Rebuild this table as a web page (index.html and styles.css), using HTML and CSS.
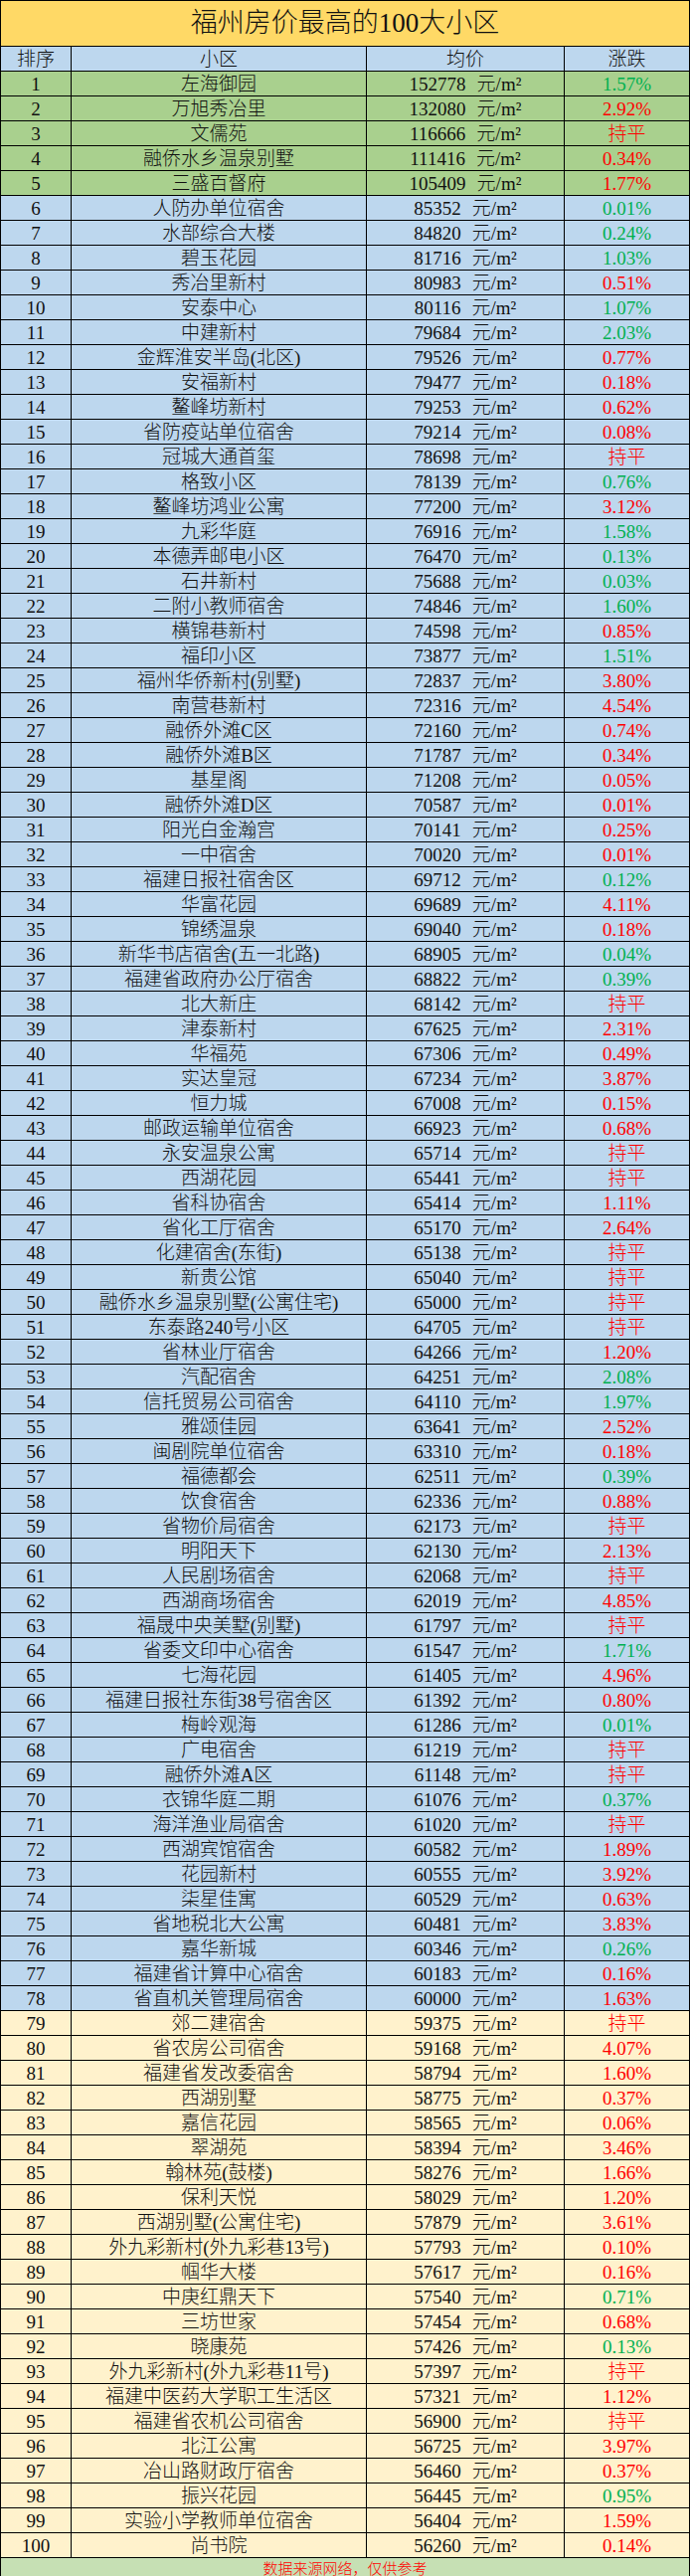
FILE: index.html
```html
<!DOCTYPE html>
<html lang="zh-CN">
<head>
<meta charset="utf-8">
<title>福州房价最高的100大小区</title>
<link rel="stylesheet" href="styles.css">
</head>
<body>
<div class="sheet">
  <div class="title">福州房价最高的100大小区</div>
  <div class="row head"><span>排序</span><span>小区</span><span>均价</span><span>涨跌</span></div>
  <div class="row g"><span>1</span><span>左海御园</span><span>152778<i>元/m²</i></span><span class="dn">1.57%</span></div>
  <div class="row g"><span>2</span><span>万旭秀冶里</span><span>132080<i>元/m²</i></span><span class="up">2.92%</span></div>
  <div class="row g"><span>3</span><span>文儒苑</span><span>116666<i>元/m²</i></span><span class="up">持平</span></div>
  <div class="row g"><span>4</span><span>融侨水乡温泉别墅</span><span>111416<i>元/m²</i></span><span class="up">0.34%</span></div>
  <div class="row g"><span>5</span><span>三盛百督府</span><span>105409<i>元/m²</i></span><span class="up">1.77%</span></div>
  <div class="row b"><span>6</span><span>人防办单位宿舍</span><span>85352<i>元/m²</i></span><span class="dn">0.01%</span></div>
  <div class="row b"><span>7</span><span>水部综合大楼</span><span>84820<i>元/m²</i></span><span class="dn">0.24%</span></div>
  <div class="row b"><span>8</span><span>碧玉花园</span><span>81716<i>元/m²</i></span><span class="dn">1.03%</span></div>
  <div class="row b"><span>9</span><span>秀冶里新村</span><span>80983<i>元/m²</i></span><span class="up">0.51%</span></div>
  <div class="row b"><span>10</span><span>安泰中心</span><span>80116<i>元/m²</i></span><span class="dn">1.07%</span></div>
  <div class="row b"><span>11</span><span>中建新村</span><span>79684<i>元/m²</i></span><span class="dn">2.03%</span></div>
  <div class="row b"><span>12</span><span>金辉淮安半岛(北区)</span><span>79526<i>元/m²</i></span><span class="up">0.77%</span></div>
  <div class="row b"><span>13</span><span>安福新村</span><span>79477<i>元/m²</i></span><span class="up">0.18%</span></div>
  <div class="row b"><span>14</span><span>鳌峰坊新村</span><span>79253<i>元/m²</i></span><span class="up">0.62%</span></div>
  <div class="row b"><span>15</span><span>省防疫站单位宿舍</span><span>79214<i>元/m²</i></span><span class="up">0.08%</span></div>
  <div class="row b"><span>16</span><span>冠城大通首玺</span><span>78698<i>元/m²</i></span><span class="up">持平</span></div>
  <div class="row b"><span>17</span><span>格致小区</span><span>78139<i>元/m²</i></span><span class="dn">0.76%</span></div>
  <div class="row b"><span>18</span><span>鳌峰坊鸿业公寓</span><span>77200<i>元/m²</i></span><span class="up">3.12%</span></div>
  <div class="row b"><span>19</span><span>九彩华庭</span><span>76916<i>元/m²</i></span><span class="dn">1.58%</span></div>
  <div class="row b"><span>20</span><span>本德弄邮电小区</span><span>76470<i>元/m²</i></span><span class="dn">0.13%</span></div>
  <div class="row b"><span>21</span><span>石井新村</span><span>75688<i>元/m²</i></span><span class="dn">0.03%</span></div>
  <div class="row b"><span>22</span><span>二附小教师宿舍</span><span>74846<i>元/m²</i></span><span class="dn">1.60%</span></div>
  <div class="row b"><span>23</span><span>横锦巷新村</span><span>74598<i>元/m²</i></span><span class="up">0.85%</span></div>
  <div class="row b"><span>24</span><span>福印小区</span><span>73877<i>元/m²</i></span><span class="dn">1.51%</span></div>
  <div class="row b"><span>25</span><span>福州华侨新村(别墅)</span><span>72837<i>元/m²</i></span><span class="up">3.80%</span></div>
  <div class="row b"><span>26</span><span>南营巷新村</span><span>72316<i>元/m²</i></span><span class="up">4.54%</span></div>
  <div class="row b"><span>27</span><span>融侨外滩C区</span><span>72160<i>元/m²</i></span><span class="up">0.74%</span></div>
  <div class="row b"><span>28</span><span>融侨外滩B区</span><span>71787<i>元/m²</i></span><span class="up">0.34%</span></div>
  <div class="row b"><span>29</span><span>基星阁</span><span>71208<i>元/m²</i></span><span class="up">0.05%</span></div>
  <div class="row b"><span>30</span><span>融侨外滩D区</span><span>70587<i>元/m²</i></span><span class="up">0.01%</span></div>
  <div class="row b"><span>31</span><span>阳光白金瀚宫</span><span>70141<i>元/m²</i></span><span class="up">0.25%</span></div>
  <div class="row b"><span>32</span><span>一中宿舍</span><span>70020<i>元/m²</i></span><span class="up">0.01%</span></div>
  <div class="row b"><span>33</span><span>福建日报社宿舍区</span><span>69712<i>元/m²</i></span><span class="dn">0.12%</span></div>
  <div class="row b"><span>34</span><span>华富花园</span><span>69689<i>元/m²</i></span><span class="up">4.11%</span></div>
  <div class="row b"><span>35</span><span>锦绣温泉</span><span>69040<i>元/m²</i></span><span class="up">0.18%</span></div>
  <div class="row b"><span>36</span><span>新华书店宿舍(五一北路)</span><span>68905<i>元/m²</i></span><span class="dn">0.04%</span></div>
  <div class="row b"><span>37</span><span>福建省政府办公厅宿舍</span><span>68822<i>元/m²</i></span><span class="dn">0.39%</span></div>
  <div class="row b"><span>38</span><span>北大新庄</span><span>68142<i>元/m²</i></span><span class="up">持平</span></div>
  <div class="row b"><span>39</span><span>津泰新村</span><span>67625<i>元/m²</i></span><span class="up">2.31%</span></div>
  <div class="row b"><span>40</span><span>华福苑</span><span>67306<i>元/m²</i></span><span class="up">0.49%</span></div>
  <div class="row b"><span>41</span><span>实达皇冠</span><span>67234<i>元/m²</i></span><span class="up">3.87%</span></div>
  <div class="row b"><span>42</span><span>恒力城</span><span>67008<i>元/m²</i></span><span class="up">0.15%</span></div>
  <div class="row b"><span>43</span><span>邮政运输单位宿舍</span><span>66923<i>元/m²</i></span><span class="up">0.68%</span></div>
  <div class="row b"><span>44</span><span>永安温泉公寓</span><span>65714<i>元/m²</i></span><span class="up">持平</span></div>
  <div class="row b"><span>45</span><span>西湖花园</span><span>65441<i>元/m²</i></span><span class="up">持平</span></div>
  <div class="row b"><span>46</span><span>省科协宿舍</span><span>65414<i>元/m²</i></span><span class="up">1.11%</span></div>
  <div class="row b"><span>47</span><span>省化工厅宿舍</span><span>65170<i>元/m²</i></span><span class="up">2.64%</span></div>
  <div class="row b"><span>48</span><span>化建宿舍(东街)</span><span>65138<i>元/m²</i></span><span class="up">持平</span></div>
  <div class="row b"><span>49</span><span>新贵公馆</span><span>65040<i>元/m²</i></span><span class="up">持平</span></div>
  <div class="row b"><span>50</span><span>融侨水乡温泉别墅(公寓住宅)</span><span>65000<i>元/m²</i></span><span class="up">持平</span></div>
  <div class="row b"><span>51</span><span>东泰路240号小区</span><span>64705<i>元/m²</i></span><span class="up">持平</span></div>
  <div class="row b"><span>52</span><span>省林业厅宿舍</span><span>64266<i>元/m²</i></span><span class="up">1.20%</span></div>
  <div class="row b"><span>53</span><span>汽配宿舍</span><span>64251<i>元/m²</i></span><span class="dn">2.08%</span></div>
  <div class="row b"><span>54</span><span>信托贸易公司宿舍</span><span>64110<i>元/m²</i></span><span class="dn">1.97%</span></div>
  <div class="row b"><span>55</span><span>雅颂佳园</span><span>63641<i>元/m²</i></span><span class="up">2.52%</span></div>
  <div class="row b"><span>56</span><span>闽剧院单位宿舍</span><span>63310<i>元/m²</i></span><span class="up">0.18%</span></div>
  <div class="row b"><span>57</span><span>福德都会</span><span>62511<i>元/m²</i></span><span class="dn">0.39%</span></div>
  <div class="row b"><span>58</span><span>饮食宿舍</span><span>62336<i>元/m²</i></span><span class="up">0.88%</span></div>
  <div class="row b"><span>59</span><span>省物价局宿舍</span><span>62173<i>元/m²</i></span><span class="up">持平</span></div>
  <div class="row b"><span>60</span><span>明阳天下</span><span>62130<i>元/m²</i></span><span class="up">2.13%</span></div>
  <div class="row b"><span>61</span><span>人民剧场宿舍</span><span>62068<i>元/m²</i></span><span class="up">持平</span></div>
  <div class="row b"><span>62</span><span>西湖商场宿舍</span><span>62019<i>元/m²</i></span><span class="up">4.85%</span></div>
  <div class="row b"><span>63</span><span>福晟中央美墅(别墅)</span><span>61797<i>元/m²</i></span><span class="up">持平</span></div>
  <div class="row b"><span>64</span><span>省委文印中心宿舍</span><span>61547<i>元/m²</i></span><span class="dn">1.71%</span></div>
  <div class="row b"><span>65</span><span>七海花园</span><span>61405<i>元/m²</i></span><span class="up">4.96%</span></div>
  <div class="row b"><span>66</span><span>福建日报社东街38号宿舍区</span><span>61392<i>元/m²</i></span><span class="up">0.80%</span></div>
  <div class="row b"><span>67</span><span>梅岭观海</span><span>61286<i>元/m²</i></span><span class="dn">0.01%</span></div>
  <div class="row b"><span>68</span><span>广电宿舍</span><span>61219<i>元/m²</i></span><span class="up">持平</span></div>
  <div class="row b"><span>69</span><span>融侨外滩A区</span><span>61148<i>元/m²</i></span><span class="up">持平</span></div>
  <div class="row b"><span>70</span><span>衣锦华庭二期</span><span>61076<i>元/m²</i></span><span class="dn">0.37%</span></div>
  <div class="row b"><span>71</span><span>海洋渔业局宿舍</span><span>61020<i>元/m²</i></span><span class="up">持平</span></div>
  <div class="row b"><span>72</span><span>西湖宾馆宿舍</span><span>60582<i>元/m²</i></span><span class="up">1.89%</span></div>
  <div class="row b"><span>73</span><span>花园新村</span><span>60555<i>元/m²</i></span><span class="up">3.92%</span></div>
  <div class="row b"><span>74</span><span>柒星佳寓</span><span>60529<i>元/m²</i></span><span class="up">0.63%</span></div>
  <div class="row b"><span>75</span><span>省地税北大公寓</span><span>60481<i>元/m²</i></span><span class="up">3.83%</span></div>
  <div class="row b"><span>76</span><span>嘉华新城</span><span>60346<i>元/m²</i></span><span class="dn">0.26%</span></div>
  <div class="row b"><span>77</span><span>福建省计算中心宿舍</span><span>60183<i>元/m²</i></span><span class="up">0.16%</span></div>
  <div class="row b"><span>78</span><span>省直机关管理局宿舍</span><span>60000<i>元/m²</i></span><span class="up">1.63%</span></div>
  <div class="row y"><span>79</span><span>郊二建宿舍</span><span>59375<i>元/m²</i></span><span class="up">持平</span></div>
  <div class="row y"><span>80</span><span>省农房公司宿舍</span><span>59168<i>元/m²</i></span><span class="up">4.07%</span></div>
  <div class="row y"><span>81</span><span>福建省发改委宿舍</span><span>58794<i>元/m²</i></span><span class="up">1.60%</span></div>
  <div class="row y"><span>82</span><span>西湖别墅</span><span>58775<i>元/m²</i></span><span class="up">0.37%</span></div>
  <div class="row y"><span>83</span><span>嘉信花园</span><span>58565<i>元/m²</i></span><span class="up">0.06%</span></div>
  <div class="row y"><span>84</span><span>翠湖苑</span><span>58394<i>元/m²</i></span><span class="up">3.46%</span></div>
  <div class="row y"><span>85</span><span>翰林苑(鼓楼)</span><span>58276<i>元/m²</i></span><span class="up">1.66%</span></div>
  <div class="row y"><span>86</span><span>保利天悦</span><span>58029<i>元/m²</i></span><span class="up">1.20%</span></div>
  <div class="row y"><span>87</span><span>西湖别墅(公寓住宅)</span><span>57879<i>元/m²</i></span><span class="up">3.61%</span></div>
  <div class="row y"><span>88</span><span>外九彩新村(外九彩巷13号)</span><span>57793<i>元/m²</i></span><span class="up">0.10%</span></div>
  <div class="row y"><span>89</span><span>帼华大楼</span><span>57617<i>元/m²</i></span><span class="up">0.16%</span></div>
  <div class="row y"><span>90</span><span>中庚红鼎天下</span><span>57540<i>元/m²</i></span><span class="dn">0.71%</span></div>
  <div class="row y"><span>91</span><span>三坊世家</span><span>57454<i>元/m²</i></span><span class="up">0.68%</span></div>
  <div class="row y"><span>92</span><span>晓康苑</span><span>57426<i>元/m²</i></span><span class="dn">0.13%</span></div>
  <div class="row y"><span>93</span><span>外九彩新村(外九彩巷11号)</span><span>57397<i>元/m²</i></span><span class="up">持平</span></div>
  <div class="row y"><span>94</span><span>福建中医药大学职工生活区</span><span>57321<i>元/m²</i></span><span class="up">1.12%</span></div>
  <div class="row y"><span>95</span><span>福建省农机公司宿舍</span><span>56900<i>元/m²</i></span><span class="up">持平</span></div>
  <div class="row y"><span>96</span><span>北江公寓</span><span>56725<i>元/m²</i></span><span class="up">3.97%</span></div>
  <div class="row y"><span>97</span><span>冶山路财政厅宿舍</span><span>56460<i>元/m²</i></span><span class="up">0.37%</span></div>
  <div class="row y"><span>98</span><span>振兴花园</span><span>56445<i>元/m²</i></span><span class="dn">0.95%</span></div>
  <div class="row y"><span>99</span><span>实验小学教师单位宿舍</span><span>56404<i>元/m²</i></span><span class="up">1.59%</span></div>
  <div class="row y"><span>100</span><span>尚书院</span><span>56260<i>元/m²</i></span><span class="up">0.14%</span></div>
  <div class="foot">数据来源网络，仅供参考</div>
</div>
</body>
</html>
```

FILE: styles.css
```css
html, body {
  margin: 0;
  padding: 0;
  background: #ffffff;
}

.sheet {
  width: 694px;
  box-sizing: border-box;
  display: grid;
  grid-template-columns: 70px 296px 198px 125px;
  gap: 1px;
  background: #000000;
  border: 1px solid #000000;
  font-family: "Liberation Serif", "Noto Sans CJK SC", serif;
  font-weight: 300;
  color: #111111;
}

.title {
  grid-column: 1 / -1;
  height: 45px;
  line-height: 45px;
  background: #ffd966;
  text-align: center;
  font-size: 27px;
}

.row {
  display: contents;
}

.row > span {
  height: 24px;
  line-height: 24px;
  padding-top: 1px;
  box-sizing: border-box;
  text-align: center;
  font-size: 19px;
  white-space: nowrap;
  overflow: hidden;
}

.head > span { background: #bdd7ee; }
.g > span { background: #a9d08e; }
.b > span { background: #bdd7ee; }
.y > span { background: #fff2cc; }

.row i {
  font-style: normal;
  margin-left: 11px;
}

.row > span.up { color: #ff0000; }
.row > span.dn { color: #00b050; }

.foot {
  grid-column: 1 / -1;
  height: 22px;
  line-height: 22px;
  background: #c6e0b4;
  color: #ff0000;
  text-align: center;
  font-size: 15px;
}
```
